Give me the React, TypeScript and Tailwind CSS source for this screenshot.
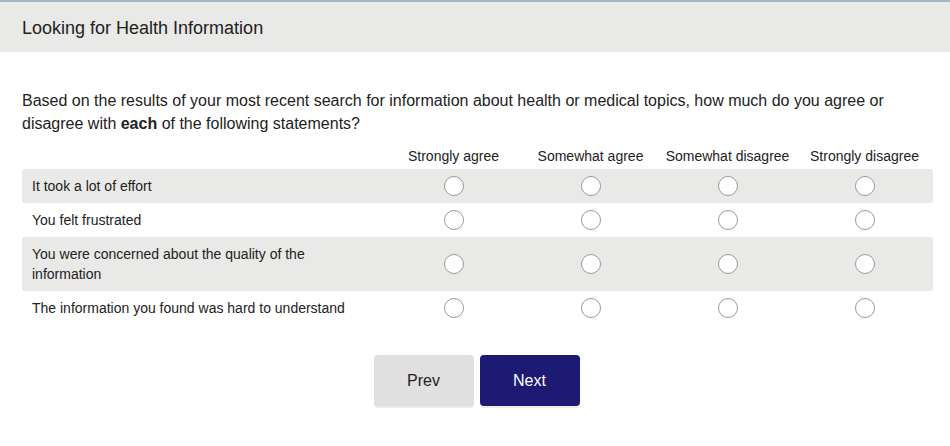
import React from 'react';

const COLUMNS = ['Strongly agree', 'Somewhat agree', 'Somewhat disagree', 'Strongly disagree'];

const STATEMENTS = [
  { text: 'It took a lot of effort', shaded: true },
  { text: 'You felt frustrated', shaded: false },
  { text: 'You were concerned about the quality of the information', shaded: true },
  { text: 'The information you found was hard to understand', shaded: false },
];

function Radio() {
  return <span className="block w-[20px] h-[20px] rounded-full border border-[#9a9a9a] bg-white" />;
}

export default function App() {
  return (
    <div className="min-h-[446px] bg-white text-[#222] font-['Liberation_Sans',Arial,sans-serif]">
      <header className="border-t-2 border-[#a3b4c9] bg-[#e9e9e7] h-[52px] flex items-center px-[22px] pt-[2px]">
        <h1 className="text-[18px]">Looking for Health Information</h1>
      </header>

      <main className="px-[22px] pr-[17px] pt-[37px]">
        <p className="text-[16px] leading-[23px]">
          Based on the results of your most recent search for information about health or medical topics, how much do you agree or disagree with <b>each</b> of the following statements?
        </p>

        <div className="mt-[9px] text-[14px]">
          <div className="grid grid-cols-[363px_repeat(4,137px)] h-[25px] items-center">
            <div />
            {COLUMNS.map((c) => (
              <div key={c} className="text-center">{c}</div>
            ))}
          </div>

          {STATEMENTS.map((s) => (
            <div
              key={s.text}
              className={`grid grid-cols-[363px_repeat(4,137px)] items-center rounded-[3px] min-h-[34px] ${s.shaded ? 'bg-[#e9e9e7]' : ''}`}
            >
              <div className="pl-[10px] pr-[30px] py-[7px] leading-[20px]">{s.text}</div>
              {COLUMNS.map((c) => (
                <div key={c} className="flex justify-center">
                  <Radio />
                </div>
              ))}
            </div>
          ))}
        </div>

        <div className="flex justify-center gap-[6px] mt-[30px] pr-[2px]">
          <button className="w-[100px] h-[51px] rounded-[4px] bg-[#e0e0e0] text-[16px] text-[#222] shadow-[0_2px_0_#ececec]">
            Prev
          </button>
          <button className="w-[100px] h-[51px] rounded-[4px] bg-[#1c1a72] text-[16px] text-white shadow-[0_2px_0_#ececec]">
            Next
          </button>
        </div>
      </main>
    </div>
  );
}
